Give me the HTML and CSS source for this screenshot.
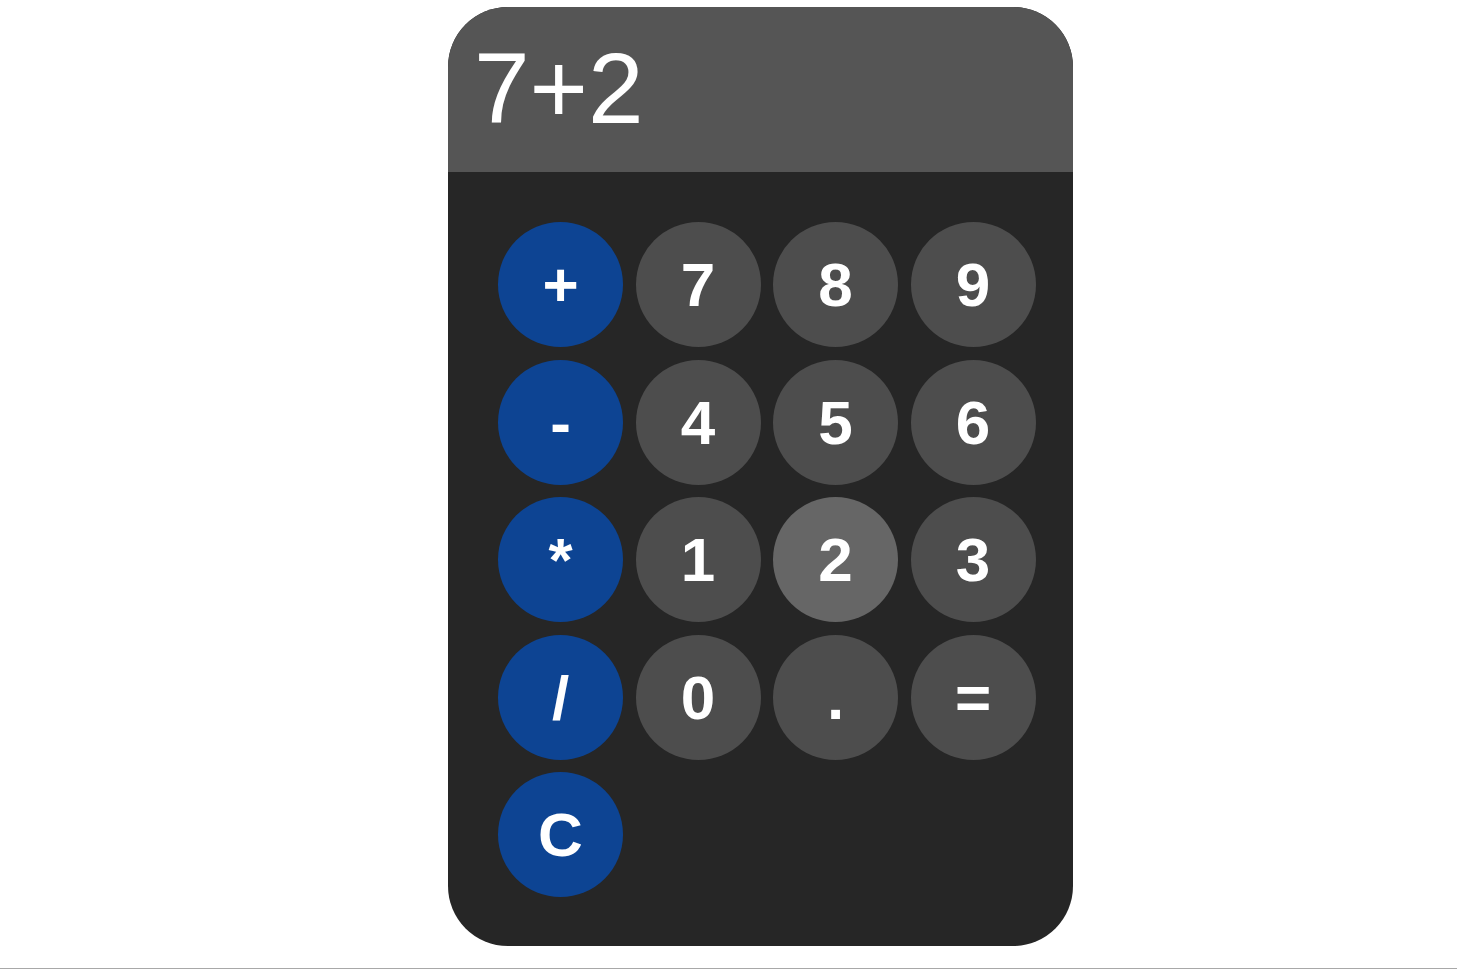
FILE: index.html
```html
<!DOCTYPE html>
<html>
<head>
<meta charset="utf-8">
<title>Calculator</title>
<link rel="stylesheet" href="styles.css">
</head>
<body>
<main class="page">
  <div class="calculator">
    <div class="display">7+2</div>
    <div class="keys">
      <button class="key op">+</button>
      <button class="key">7</button>
      <button class="key">8</button>
      <button class="key">9</button>
      <button class="key op">-</button>
      <button class="key">4</button>
      <button class="key">5</button>
      <button class="key">6</button>
      <button class="key op">*</button>
      <button class="key">1</button>
      <button class="key active">2</button>
      <button class="key">3</button>
      <button class="key op">/</button>
      <button class="key">0</button>
      <button class="key">.</button>
      <button class="key">=</button>
      <button class="key op">C</button>
    </div>
  </div>
</main>
<div class="rule"></div>
</body>
</html>
```
FILE: styles.css
```css
html, body {
  margin: 0;
  padding: 0;
  background: #ffffff;
  font-family: "Liberation Sans", Arial, sans-serif;
}

.page {
  display: flex;
  justify-content: center;
  padding-top: 7px;
}

.calculator {
  width: 625px;
  margin-left: 64px;
  background: #262626;
  border-radius: 60px;
  overflow: hidden;
}

.display {
  height: 165px;
  box-sizing: border-box;
  background: #555555;
  color: #ffffff;
  font-size: 100px;
  line-height: 1.117;
  padding: 26px 0 0 26px;
}

.keys {
  display: grid;
  grid-template-columns: repeat(4, 125px);
  gap: 12.5px;
  padding: 50px 37.5px 49px 50px;
}

.key {
  width: 125px;
  height: 125px;
  border: none;
  border-radius: 50%;
  background: #4d4d4d;
  color: #ffffff;
  font-family: "Liberation Sans", Arial, sans-serif;
  font-weight: bold;
  font-size: 62px;
  padding: 0;
  display: flex;
  align-items: center;
  justify-content: center;
}

.key.op {
  background: #0d4493;
}

.key.active {
  background: #666666;
}

.rule {
  height: 0;
  margin-top: 22px;
  border-top: 1px solid #a8a8a8;
}
```
